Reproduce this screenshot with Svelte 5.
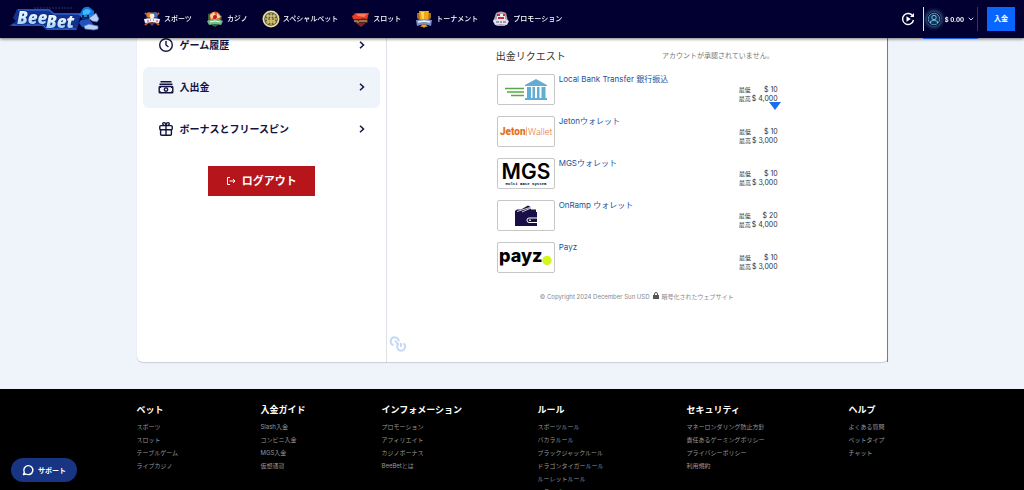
<script>
  const nav = [
    { label: 'スポーツ', icon: 'sports' },
    { label: 'カジノ', icon: 'casino' },
    { label: 'スペシャルベット', icon: 'special' },
    { label: 'スロット', icon: 'slots' },
    { label: 'トーナメント', icon: 'tournament' },
    { label: 'プロモーション', icon: 'promo' }
  ];

  const menu = [
    { label: 'ゲーム履歴', icon: 'clock', active: false },
    { label: '入出金', icon: 'cash', active: true },
    { label: 'ボーナスとフリースピン', icon: 'gift', active: false }
  ];

  const methods = [
    { id: 'bank', name: 'Local Bank Transfer 銀行振込', min: '$ 10', max: '$ 4,000', open: true },
    { id: 'jeton', name: 'Jetonウォレット', min: '$ 10', max: '$ 3,000' },
    { id: 'mgs', name: 'MGSウォレット', min: '$ 10', max: '$ 3,000' },
    { id: 'onramp', name: 'OnRamp ウォレット', min: '$ 20', max: '$ 4,000' },
    { id: 'payz', name: 'Payz', min: '$ 10', max: '$ 3,000' }
  ];

  const columns = [
    { title: 'ベット', links: ['スポーツ', 'スロット', 'テーブルゲーム', 'ライブカジノ'] },
    { title: '入金ガイド', links: ['Slash入金', 'コンビニ入金', 'MGS入金', '仮想通貨'] },
    { title: 'インフォメーション', links: ['プロモーション', 'アフィリエイト', 'カジノボーナス', 'BeeBetとは'] },
    { title: 'ルール', links: ['スポーツルール', 'バカラルール', 'ブラックジャックルール', 'ドラゴンタイガールール', 'ルーレットルール', 'トランプルール'] },
    { title: 'セキュリティ', links: ['マネーロンダリング防止方針', '責任あるゲーミングポリシー', 'プライバシーポリシー', '利用規約'] },
    { title: 'ヘルプ', links: ['よくある質問', 'ベットタイプ', 'チャット'] }
  ];
</script>

<header>
  <a class="logo" href="#home" aria-label="BeeBet">
    <svg viewBox="0 0 92 26" width="92" height="26">
      <defs>
        <linearGradient id="metal" x1="0" y1="0" x2="0" y2="1">
          <stop offset="0" stop-color="#ffffff" />
          <stop offset=".5" stop-color="#d5edff" />
          <stop offset="1" stop-color="#75b9f0" />
        </linearGradient>
      </defs>
      <path d="M8 3h33l4 4h27l-4 17H37l-4-4H0l7-5-3-3z" fill="#12318f" />
      <path d="M3 19h31l4 4h29M9 4h31l5 4h26" fill="none" stroke="#3976e8" />
      <path d="M25 2h38" stroke="#1d3a66" stroke-dasharray="2 1" />
      <g fill="url(#metal)" stroke="#0b2472" stroke-width="1" paint-order="stroke" font-family="Open Sans, sans-serif" font-weight="800" font-style="italic">
        <text x="8" y="18" font-size="17">Bee</text>
        <text x="37" y="22" font-size="17">Bet</text>
      </g>
      <path d="M72 6q2-6 8-5l5 4v6l-4 3-7-1-4-4z" fill="#1678dd" />
      <path d="M74 5q4-4 8 0l-2 3-6 1z" fill="#42b9fa" />
      <path d="M73 9h8l2 3-5 2-5-2z" fill="#07246e" />
      <path d="M75 10h3m2 0h2" stroke="#6ed1ff" />
      <path d="M72 14l8-1 4 5-3 5-8-2-3-4z" fill="#2053bd" />
      <path d="M83 10l4-3 2 4 1 2-2 3-5-1-3-3zM75 20l5-2 9 2v3l-4 1-9-1z" fill="#b7d0f4" stroke="#416cc5" stroke-width=".7" />
    </svg>
  </a>

  <nav>
    {#each nav as item}
      <a href="#{item.icon}">
        <svg viewBox="0 0 18 18" width="18" height="18">
          {#if item.icon === 'sports'}
            <path d="M2 3l14 12M16 3L2 15" stroke="#c95a2b" stroke-width="2" />
            <path d="M4 2h10l1 8-6 6-6-6z" fill="#583c47" />
            <circle cx="6" cy="5" r="2.5" fill="#e87b22" />
            <circle cx="12" cy="5" r="2.5" fill="#416ec8" />
            <circle cx="9" cy="6" r="2.4" fill="#fff2cb" />
            <path d="M1 9l8-1 8 1-1 4-7-1-7 1z" fill="#f6efff" />
            <path d="M4 11h2m1-1h1m2 0h1m2 1h2" stroke="#803b56" />
          {:else if item.icon === 'casino'}
            <path d="M2 4l6-2 8 4-1 7-6 4-7-4z" fill="#30633b" />
            <circle cx="9" cy="7" r="5.5" fill="#e55b2e" />
            <path d="M4 5l4-3 2 4-5 3zM11 3l4 4-5 2z" fill="#ffd2a0" />
            <circle cx="9" cy="7" r="2" fill="#b72218" />
            <path d="M1 11q8-4 16 0l-2 4q-6-2-12 0z" fill="#75b98b" />
            <path d="M4 12q5-2 10 0" fill="none" stroke="#effff2" />
          {:else if item.icon === 'special'}
            <circle cx="9" cy="9" r="8.5" fill="#d7c681" />
            <circle cx="9" cy="9" r="6.8" fill="#62613f" />
            <circle cx="9" cy="9" r="7.6" fill="none" stroke="#fff4b5" stroke-width=".7" />
            <path d="M4 6h10M3 9h12M4 12h10M9 3v12M6 4v10m6-10v10" stroke="#f2e5a7" stroke-width=".9" />
            <path d="M5 8h8v3H5z" fill="#d1b952" />
            <path d="M6 9h2m2 0h2" stroke="#423b2a" />
          {:else if item.icon === 'slots'}
            <path d="M2 3h14l-1 9-6 5-5-4z" fill="#8d211d" />
            <path d="M0 6l5-3h12l-2 6-5-1-3 2-6-1z" fill="#e43e24" />
            <path d="M4 4h11l-3 3-6-1z" fill="#ff7961" />
            <path d="M1 9h15v4H3z" fill="#4e251e" />
            <path d="M3 10v2m2-2v2h2m1-2v2m2-2v2m2-2v2m2-2v2" stroke="#f2be82" />
          {:else if item.icon === 'tournament'}
            <path d="M2 3h14v5l-5 4v3l2 2H5l2-2v-3L2 8z" fill="#a96d21" />
            <path d="M4 1h10l-1 9-4 3-4-3z" fill="#f4a619" />
            <path d="M6 2h3v9l-2-2z" fill="#ffd951" />
            <path d="M1 10l8-1 8 1-1 6-7-2-7 2z" fill="#7890c8" />
            <path d="M3 12l6-1 6 1" fill="none" stroke="#eef2ff" stroke-width="1.5" />
            <path d="M6 15h6l-3 3z" fill="#e0a43a" />
          {:else}
            <path d="M4 3q5-3 10 0l2 8-3 5H5l-4-4z" fill="#a5a3b4" />
            <path d="M5 4h8v6H5z" fill="#f3eaea" />
            <path d="M5 5h3M11 5h2M6 8h6" stroke="#c62e3e" stroke-width="2" />
            <path d="M1 10l5-1 3 1 4-1 4 2-2 4-6-1-6 1z" fill="#e5e1ed" />
            <path d="M4 12h3m1 0h2m1 0h3" stroke="#594c68" />
          {/if}
        </svg>
        <span>{item.label}</span>
      </a>
    {/each}
  </nav>

  <div class="account">
    <button class="replay" aria-label="ベット履歴">
      <svg viewBox="0 0 14 14" width="14" height="14">
        <path d="M12 4.5A5.5 5.5 0 1 0 12.5 8" fill="none" stroke="#fff" stroke-width="1.4" />
        <path d="M13 1v4H9z" fill="#fff" />
        <path d="M5.5 4.3v5.4L9.8 7z" fill="#fff" />
      </svg>
    </button>
    <button class="balance">
      <svg class="avatar" viewBox="0 0 14 14" width="14" height="14">
        <circle cx="7" cy="7" r="5.8" fill="#14345d" stroke="#5291b6" />
        <circle cx="7" cy="5.5" r="2.2" fill="none" stroke="#79bddf" />
        <path d="M3.5 11V9.5q3.500-3 7 0V11" fill="none" stroke="#79bddf" />
      </svg>
      <span>$ 0.00</span>
      <svg viewBox="0 0 6 4" width="6" height="4"><path d="M.7.7L3 3 5.3.7" fill="none" stroke="#d6dded" /></svg>
    </button>
    <button class="deposit">入金</button>
  </div>
</header>

<main>
  <div class="card">
    <aside>
      <ul class="menu">
        {#each menu as item}
          <li>
            <a href="#{item.icon}" class:active={item.active}>
              <svg viewBox="0 0 16 16" width="16" height="16" fill="none" stroke="#11143f" stroke-width="1.4">
                {#if item.icon === 'clock'}
                  <circle cx="8" cy="8" r="6.3" />
                  <path d="M8 4v4l2.5 2" />
                {:else if item.icon === 'cash'}
                  <path d="M2.5 2.8h11M1.5 5.2h13" />
                  <rect x="1.2" y="7.5" width="13.6" height="6.3" rx=".8" />
                  <circle cx="8" cy="10.6" r="1.7" />
                  <path d="M1.5 9.5l2-2m9 0l2 2M1.5 12l1.8 1.6m9.4 0l1.8-1.6" stroke-width="1" />
                {:else}
                  <rect x="1.8" y="4.6" width="12.4" height="4.2" rx="1" />
                  <path d="M2.6 8.8v4.4q0 1 1 1h8.8q1 0 1-1V8.8M8 4.6v9.6M8 4.6C4 4.6 4 1.6 6 1.6q2 0 2 3 0-3 2-3c2 0 2 3-2 3" />
                {/if}
              </svg>
              <span>{item.label}</span>
              <svg class="chevron" viewBox="0 0 6 8" width="6" height="8"><path d="M1 .8L4.5 4 1 7.2" fill="none" stroke="#11143f" stroke-width="1.5" /></svg>
            </a>
          </li>
        {/each}
      </ul>
      <button class="logout">
        <svg viewBox="0 0 10 10" width="10" height="10" fill="none" stroke="#fff">
          <path d="M4 1.5H1.5v7H4M3.5 5H9M7 3l2 2-2 2" />
        </svg>
        ログアウト
      </button>
    </aside>

    <section class="panel">
      <div class="cashier">
        <div class="heading">
          <h1>出金リクエスト</h1>
          <p>アカウントが承認されていません。</p>
        </div>

        <ul class="methods">
          {#each methods as m}
            <li>
              <div class="brand">
                <svg viewBox="0 0 56 29" width="56" height="29">
                  {#if m.id === 'bank'}
                    <path d="M7 13.5h19M9 17h17M13 20.5h13" stroke="#58a844" stroke-width="1.5" />
                    <path d="M27 10L38 4l11 6v1H27zM29 12h4v11h-4zM34.5 12H37v11h-2.500zM39 12h2.500v11H39zM43.500 12h4v11h-4zM27 23h22v2H27z" fill="#60aed3" />
                  {:else if m.id === 'jeton'}
                    <text x="2" y="18" class="jeton">Jeton</text>
                    <path d="M28.5 10v9" stroke="#edb994" />
                    <text x="30" y="18" class="wallet">Wallet</text>
                  {:else if m.id === 'mgs'}
                    <text x="28" y="20" class="mgs">MGS</text>
                    <text x="28" y="26" class="gate">Multi Gate System</text>
                  {:else if m.id === 'onramp'}
                    <path d="M17 10l2-1.500h4l7-4 2 1 1 3h5V11h1v14H17z" fill="#190e45" />
                    <path d="M19 10.500l13-4M24 11l9-4" stroke="#fff" stroke-width=".8" />
                    <path d="M39 17h-8q-2 0-2 2.200t2 2.300h8" fill="none" stroke="#fff" />
                    <circle cx="32" cy="19.2" r=".9" fill="#fff" />
                  {:else}
                    <text x="1" y="19" class="payz">payz</text>
                    <circle cx="49" cy="17.5" r="4.7" fill="#d4f51e" />
                  {/if}
                </svg>
              </div>
              <a href="#{m.id}">{m.name}</a>
              <dl>
                <dt>最低</dt><dd>{m.min}</dd>
                <dt>最高</dt><dd>{m.max}</dd>
              </dl>
              {#if m.open}<i class="marker"></i>{/if}
            </li>
          {/each}
        </ul>

        <p class="legal">
          <span>© Copyright 2024 December Sun USD</span>
          <svg viewBox="0 0 6 7" width="6" height="7"><path d="M0 3h6v4H0z" fill="#555" /><path d="M1.5 3V2q0-1.500 1.500-1.500T4.500 2v1" fill="none" stroke="#555" /></svg>
          <span>暗号化されたウェブサイト</span>
        </p>
      </div>

      <svg class="chain" viewBox="0 0 18 18" width="18" height="18" fill="none" stroke="#c5d9f3" stroke-width="2">
        <path d="M4.5 10.2A4 4 0 1 1 9.7 6.5M6 5.5l3 4" />
        <path d="M9.8 8.4a4 4 0 1 0 4.7 0M12 8v4" />
      </svg>
    </section>
  </div>
</main>

<footer>
  <div class="columns">
    {#each columns as col}
      <div>
        <h2>{col.title}</h2>
        <ul>
          {#each col.links as link}
            <li><a href="#info">{link}</a></li>
          {/each}
        </ul>
      </div>
    {/each}
  </div>
</footer>

<button class="support">
  <svg viewBox="0 0 12 12" width="12" height="12"><path d="M1.5 10.5l.8-2.300A4.500 4.500 0 1 1 4 10z" fill="none" stroke="#fff" stroke-width="1.4" stroke-linejoin="round" /></svg>
  サポート
</button>

<style>
  :global(body) {
    background: #eff3fa;
    font-family: Inter, 'Noto Sans CJK JP', sans-serif;
    color: #11143f;
  }
  :global(html) { scrollbar-width: none; }
  ul, dl, dd, h1, h2, p { margin: 0; padding: 0; list-style: none; }
  a { color: inherit; text-decoration: none; }
  button { border: 0; padding: 0; background: none; color: #fff; font-family: inherit; cursor: pointer; }
  svg { display: block; flex: none; }

  header {
    position: fixed;
    inset: 0 0 auto;
    z-index: 2;
    display: flex;
    align-items: center;
    height: 38px;
    padding: 0 9px;
    background: #010030;
    box-shadow: 0 1px 3px #0008;
    color: #fff;
  }
  nav { display: flex; gap: 14px; margin-left: 42px; }
  nav a { display: flex; align-items: center; gap: 3px; font-size: 7px; line-height: 10px; font-weight: 500; }
  .account { display: flex; align-items: center; height: 38px; margin-left: auto; }
  .replay { margin-right: 8px; }
  .balance {
    display: flex;
    align-items: center;
    gap: 4px;
    height: 38px;
    padding: 0 4px;
    margin-right: 9px;
    font-size: 6px;
    font-weight: 700;
    background:
      linear-gradient(#e6e9f5, #e6e9f5) 0 7px / 1px 24px no-repeat,
      linear-gradient(#34365a, #34365a) 100% 7px / 1px 24px no-repeat;
    box-shadow: 0 1px #1b63dc;
  }
  .avatar { border-radius: 50%; box-shadow: 0 0 4px 1px #4c7898; }
  .deposit { padding: 0 7px; background: #0866ff; font-size: 7px; line-height: 24px; font-weight: 700; }

  main { padding: 0 16px 27px; }
  .card {
    display: grid;
    grid-template-columns: 1fr 2fr;
    max-width: 751px;
    margin: 0 auto;
    background: #fff;
    border-radius: 0 0 6px 6px;
    box-shadow: 0 1px 1px #c9ced8;
  }
  aside { padding: 25px 6px 0; border-right: 1px solid #dde0e7; }
  .menu { display: grid; gap: 1px; }
  .menu a {
    display: flex;
    align-items: center;
    gap: 6px;
    height: 39px;
    padding: 0 15px 2px;
    border-radius: 6px;
    font-size: 10px;
    line-height: 16px;
    font-weight: 700;
  }
  .menu .active { background: #eff3fa; }
  .chevron { margin-left: auto; }
  .logout {
    display: flex;
    align-items: center;
    gap: 6px;
    margin: 16px auto 0;
    padding: 0 18px;
    background: #b5151b;
    font-size: 11px;
    line-height: 30px;
    font-weight: 700;
  }

  .panel { display: flex; flex-direction: column; border-right: 1px solid #767b88; }
  .cashier { width: 100%; max-width: 282px; margin: 0 auto; padding-top: 48px; color: #333; }
  .heading { display: flex; align-items: center; justify-content: space-between; line-height: 16px; }
  h1 { font-size: 10px; font-weight: 400; }
  .heading p { padding-right: 4px; font-size: 7px; color: #777; }
  .methods { display: grid; gap: 11px; margin-top: 10px; }
  .methods li { position: relative; display: flex; gap: 4px; padding-left: 1px; }
  .brand { border: 1px solid #c7c7c7; border-radius: 2px; }
  .methods a { color: #20529a; font-size: 8px; line-height: 11px; }
  dl {
    display: grid;
    grid-template-columns: auto auto;
    column-gap: 1px;
    align-content: start;
    margin-left: auto;
    padding-top: 11px;
    font-size: 7px;
    line-height: 9px;
  }
  dt { font-size: 6px; }
  dd { text-align: right; }
  .marker {
    position: absolute;
    right: -3px;
    bottom: -5px;
    border: 6px solid transparent;
    border-top: 8px solid #1b6cf0;
    border-bottom: 0;
  }
  .legal {
    display: flex;
    justify-content: center;
    gap: 3px;
    margin-top: 19px;
    font-size: 6px;
    line-height: 9px;
    color: #888;
  }
  .chain { margin: 34px 0 9px 2px; }

  .jeton, .wallet { font-family: Roboto, sans-serif; font-size: 10px; fill: #e8711f; }
  .jeton { font-weight: 900; }
  .wallet { font-weight: 300; font-size: 9px; }
  .mgs { font-family: Inter, sans-serif; font-size: 21px; font-weight: 600; text-anchor: middle; fill: #000; }
  .gate { font-family: 'Liberation Mono', monospace; font-size: 4px; font-weight: 700; text-anchor: middle; fill: #000; }
  .payz { font-family: Inter, sans-serif; font-size: 18px; font-weight: 800; fill: #000; }

  footer { padding: 14px 16px; background: #000; }
  .columns {
    display: grid;
    grid-template-columns: 124fr 121fr 156fr 149fr 162fr 39fr;
    max-width: 751px;
    margin: 0 auto;
    white-space: nowrap;
  }
  h2 { margin-bottom: 4px; color: #fff; font-size: 9px; line-height: 13px; font-weight: 700; }
  footer li { color: #999; font-size: 6px; line-height: 13px; }
  footer a { display: block; }

  .support {
    position: fixed;
    left: 11px;
    bottom: 8px;
    display: flex;
    align-items: center;
    gap: 4px;
    height: 24px;
    padding: 0 11px;
    border-radius: 12px;
    background: #173583;
    font-size: 7px;
    font-weight: 700;
  }
</style>
